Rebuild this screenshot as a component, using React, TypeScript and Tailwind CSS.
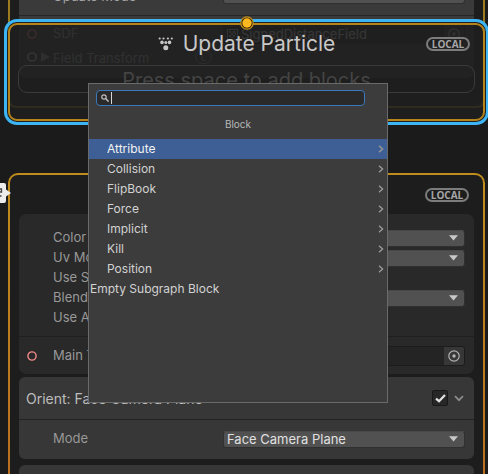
import type { ReactNode } from "react";

const categories = ["Attribute", "Collision", "FlipBook", "Force", "Implicit", "Kill", "Position"];

function LocalBadge() {
  return (
    <span className="flex h-[14px] w-[44px] items-center justify-center rounded-full border-2 border-[#7c7c7c] font-['Open_Sans',sans-serif] text-[10px] leading-none font-bold text-[#a6a6a6]">
      LOCAL
    </span>
  );
}

function ParticleIcon() {
  return (
    <svg width="16" height="14" viewBox="0 0 16 14" fill="#c8c8c8" aria-hidden="true">
      <circle cx="1.7" cy="1.5" r="1.1" />
      <circle cx="5.5" cy="1.5" r="1.1" />
      <circle cx="9.9" cy="1.5" r="1.1" />
      <circle cx="13.8" cy="1.5" r="1.1" />
      <circle cx="4" cy="5.4" r="1.8" />
      <circle cx="7.8" cy="5.6" r="1.5" />
      <circle cx="11.5" cy="5.4" r="1.8" />
      <circle cx="7.8" cy="10.8" r="2.5" />
    </svg>
  );
}

function Port({ color }: { color: string }) {
  return (
    <svg width="10" height="10" viewBox="0 0 10 10" fill="none" stroke={color} strokeWidth="1.4" aria-hidden="true">
      <circle cx="5" cy="5" r="4.1" />
    </svg>
  );
}

function Dropdown({ id, value }: { id: string; value: string }) {
  return (
    <div className="grid flex-1 items-center">
      <select
        id={id}
        defaultValue={value}
        className="col-start-1 row-start-1 h-[17px] w-full appearance-none rounded-[3px] border border-[#303030] border-t-[#484848] bg-[#515151] pl-[3px] text-[13px] leading-[15px] text-[#e0e0e0]"
      >
        <option>{value}</option>
      </select>
      <svg
        className="pointer-events-none col-start-1 row-start-1 mr-[7px] justify-self-end"
        width="9"
        height="6"
        viewBox="0 0 9 6"
        fill="#c8c8c8"
        aria-hidden="true"
      >
        <path d="M0 .3h9L4.5 5.6z" />
      </svg>
    </div>
  );
}

function Row({ id, label, height, children }: { id?: string; label: string; height: string; children?: ReactNode }) {
  return (
    <div className={`flex items-center pr-[9px] pl-[34px] ${height}`}>
      <label htmlFor={id} className="w-[170px] shrink-0 whitespace-nowrap">
        {label}
      </label>
      {children}
    </div>
  );
}

function PickerIcon() {
  return (
    <svg width="12" height="12" viewBox="0 0 12 12" fill="none" stroke="#b4b4b4" aria-hidden="true">
      <circle cx="6" cy="6" r="5.2" strokeWidth="1.2" />
      <circle cx="6" cy="6" r="1.7" fill="#b4b4b4" stroke="none" />
    </svg>
  );
}

function ObjectField({ id, value, textured }: { id: string; value: string; textured?: boolean }) {
  return (
    <div className="flex h-5 flex-1 items-center overflow-hidden rounded-[3px] border border-[#1c1c1c] bg-[#242424] pl-[3px]">
      {textured && (
        <svg className="mr-[3px] shrink-0" width="11" height="11" viewBox="0 0 11 11" aria-hidden="true">
          <rect x=".5" y=".5" width="10" height="10" fill="none" stroke="#9fb6c6" />
          <path
            d="M2 2h2v2H2zM6 2h2v2H6zM4 4h2v2H4zM8 4h1v2H8zM2 6h2v2H2zM6 6h2v2H6zM4 8h2v1H4z"
            fill="#b4b4b4"
          />
        </svg>
      )}
      <input
        id={id}
        readOnly
        defaultValue={value}
        className="h-full min-w-0 flex-1 bg-transparent text-[13px] text-[#d0d0d0] outline-none"
      />
      <button aria-label="Pick object" className="flex h-full w-5 items-center justify-center bg-[#373737]">
        <PickerIcon />
      </button>
    </div>
  );
}

function InitializeNode() {
  return (
    <section className="absolute top-0 right-[3px] left-2 h-[108px] rounded-b-[8px] border-2 border-t-0 border-[#9c7a1e] bg-[#1d1d1d] px-[9px]">
      <div className="rounded-b-[7px] bg-[#3a3a3a] text-[13px] text-[#a4a4a4]">
        <div className="flex h-4 items-start border-b border-[#262626] pr-[9px] pl-[34px]">
          <label htmlFor="update-mode" className="-mt-[13px] w-[170px] leading-[18px]">
            Update Mode
          </label>
          <div className="-mt-[13px] flex flex-1">
            <Dropdown id="update-mode" value="Overwrite" />
          </div>
        </div>
        <div className="flex h-9 items-center pr-[9px] pl-2">
          <Port color="#ff8080" />
          <label htmlFor="sdf" className="ml-4 w-[170px] shrink-0">
            SDF
          </label>
          <ObjectField id="sdf" value="SignedDistanceField" textured />
        </div>
        <div className="flex h-[26px] items-start pl-2 leading-[12px]">
          <Port color="#d0d0d0" />
          <svg className="ml-[3px]" width="10" height="10" viewBox="0 0 10 10" fill="#909090" aria-hidden="true">
            <path d="M1 0l9 5-9 5z" />
          </svg>
          <span className="ml-[3px] w-[142px]">Field Transform</span>
          <span className="-mt-[2px] flex h-[14px] w-[17px] items-center justify-center rounded-full border border-[#808080] text-[10px]">
            L
          </span>
        </div>
      </div>
    </section>
  );
}

function UpdateNode() {
  return (
    <section className="absolute top-[19px] -right-px left-1 rounded-[13px] border-[3px] border-[#3db5f5] bg-[#1f1f1f]/87 p-px">
      <div className="h-[98px] rounded-[9px] border-2 border-[#b5841b] px-2 pt-[5px]">
        <div className="grid grid-cols-[1fr_auto_1fr] items-center">
          <span />
          <h2 className="flex h-[27px] items-center gap-[9px] text-[21px] text-[#c8c8c8]">
            <ParticleIcon />
            Update Particle
          </h2>
          <span className="mr-[5px] justify-self-end">
            <LocalBadge />
          </span>
        </div>
        <div className="mt-2 flex h-7 items-center justify-center rounded-[9px] border border-[#3a3a3a] pt-px text-[20px] text-[#444]">
          Press space to add blocks
        </div>
      </div>
      <svg
        className="absolute -top-[6px] left-1/2 -translate-x-1/2"
        width="14"
        height="14"
        viewBox="0 0 14 14"
        aria-hidden="true"
      >
        <circle cx="7" cy="7" r="6.2" fill="#2a210c" stroke="#c9921c" strokeWidth="1.2" />
        <circle cx="7" cy="7" r="4.7" fill="#ffb81e" />
      </svg>
    </section>
  );
}

function OutputNode() {
  return (
    <section className="absolute top-[173px] right-[3px] left-2 rounded-t-[10px] bg-linear-to-b from-[#c08d1c] to-[#b8681f] p-[2px] pb-0">
      <div className="rounded-t-[8px] bg-[#1d1d1d] px-[9px] text-[13px] text-[#989898]">
        <div className="flex h-[39px] items-center justify-end pr-[5px]">
          <LocalBadge />
        </div>
        <div className="rounded-[7px] bg-[#292929]">
          <div className="pt-[14px] pb-2">
            <Row id="color-mapping" label="Color Mapping" height="h-5">
              <Dropdown id="color-mapping" value="Default" />
            </Row>
            <Row id="uv-mode" label="Uv Mode" height="h-5">
              <Dropdown id="uv-mode" value="Default" />
            </Row>
            <Row label="Use Soft Particle" height="h-5" />
            <Row id="blend-mode" label="Blend Mode" height="h-5">
              <Dropdown id="blend-mode" value="Alpha" />
            </Row>
            <Row label="Use Alpha Clipping" height="h-5" />
          </div>
          <div className="flex h-[38px] items-center border-t border-[#1f1f1f] pr-[9px] pl-2">
            <Port color="#f08a8a" />
            <label htmlFor="main-texture" className="ml-4 w-[170px] shrink-0">
              Main Texture
            </label>
            <ObjectField id="main-texture" value="Default-Particle" />
          </div>
        </div>
        <div className="mt-[3px] rounded-[6px] bg-[#373737]">
          <div className="flex h-[43px] items-center border-b border-[#232323] pr-[10px] pl-[7px]">
            <h3 className="flex-1 pt-px text-[14px] text-[#bdbdbd]">Orient: Face Camera Plane</h3>
            <label className="grid h-4 w-4 place-items-center rounded-[2px] border border-[#191919] bg-[#272727]">
              <input
                type="checkbox"
                defaultChecked
                aria-label="Enable block"
                className="peer col-start-1 row-start-1 h-[14px] w-[14px] appearance-none"
              />
              <svg
                className="pointer-events-none invisible col-start-1 row-start-1 peer-checked:visible"
                width="11"
                height="9"
                viewBox="0 0 11 9"
                fill="none"
                stroke="#e2e2e2"
                strokeWidth="2.2"
                aria-hidden="true"
              >
                <path d="M1 4.6l3 2.6L10 1" />
              </svg>
            </label>
            <button aria-label="Collapse block" className="ml-[6px] flex h-4 w-[10px] items-center justify-center">
              <svg width="10" height="7" viewBox="0 0 10 7" fill="none" stroke="#8c8c8c" strokeWidth="1.7" aria-hidden="true">
                <path d="M1 1.2l4 4 4-4" />
              </svg>
            </button>
          </div>
          <div className="pt-2 pb-[9px]">
            <Row id="orient-mode" label="Mode" height="h-[22px]">
              <Dropdown id="orient-mode" value="Face Camera Plane" />
            </Row>
          </div>
        </div>
        <div className="mt-[6px] h-20 rounded-t-[6px] bg-[#373737]" />
      </div>
    </section>
  );
}

function SearchMenu() {
  return (
    <div className="absolute top-[83px] left-[88px] h-80 w-[300px] border border-[#6a6a6a] bg-[#3c3c3c] text-[12px] text-[#d2d2d2]">
      <div className="mt-[6px] mr-[22px] ml-[7px] flex h-4 items-center rounded-[4px] border border-[#3a79bb] bg-[#2a2a2a] pl-1">
        <svg width="8" height="8" viewBox="0 0 8 8" fill="none" stroke="#c4c4c4" aria-hidden="true">
          <circle cx="3" cy="3" r="2.2" strokeWidth="1.2" />
          <path d="M4.6 4.6l3 3" strokeWidth="1.4" />
        </svg>
        <span className="ml-[2px] h-3 w-px bg-[#d8d8d8]" />
        <input aria-label="Search blocks" className="h-full min-w-0 flex-1 bg-transparent text-[12px] outline-none" />
      </div>
      <h3 className="flex h-[33px] items-center justify-center pt-[3px] text-[10px] text-[#b8b8b8]">Block</h3>
      <ul>
        {categories.map((name, i) => (
          <li key={name}>
            <button
              className={`flex h-5 w-full items-center justify-between pr-[3px] pl-[18px] ${i === 0 ? "bg-[#3e5f96] text-[#f2f2f2]" : ""}`}
            >
              {name}
              <svg width="6" height="8" viewBox="0 0 6 8" fill="none" stroke="#989898" strokeWidth="1.4" aria-hidden="true">
                <path d="M1 .7L4.6 4 1 7.3" />
              </svg>
            </button>
          </li>
        ))}
        <li>
          <button className="flex h-5 w-full items-center pl-px">Empty Subgraph Block</button>
        </li>
      </ul>
    </div>
  );
}

function LinkTag() {
  return (
    <svg className="absolute top-[183px] left-0" width="11" height="20" viewBox="0 0 11 20" aria-hidden="true">
      <path d="M0 0h4q2 0 2 2v4.500l5 3.500-5 3.500V18q0 2-2 2H0z" fill="#ececec" />
      <path d="M0 6h1.500v3H0M0 13h1.500" fill="none" stroke="#444" strokeWidth="1.300" />
    </svg>
  );
}

export default function App() {
  return (
    <main className="relative h-screen overflow-hidden bg-[#1b1b1b] font-[Inter,sans-serif]">
      <InitializeNode />
      <UpdateNode />
      <OutputNode />
      <LinkTag />
      <SearchMenu />
    </main>
  );
}
